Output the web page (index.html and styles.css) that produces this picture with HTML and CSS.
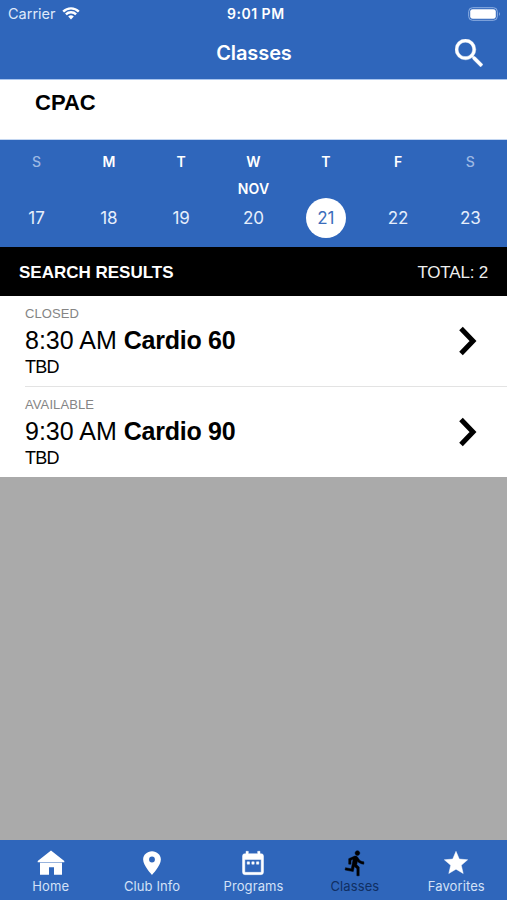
FILE: index.html
```html
<!DOCTYPE html>
<html lang="en">
<head>
<meta charset="utf-8">
<title>Classes</title>
<link rel="stylesheet" href="styles.css">
</head>
<body>
<div class="app">
  <header class="header">
    <div class="status">
      <div class="carrier"><span>Carrier</span>
        <svg class="wifi" viewBox="0 0 18 13"><path d="M9 12.4 6.2 9.6a4 4 0 0 1 5.6 0z" fill="#fff"/><path d="M3.9 7.4a7.3 7.3 0 0 1 10.2 0M1.2 4.6a11.1 11.1 0 0 1 15.6 0" fill="none" stroke="#fff" stroke-width="2.4"/></svg>
      </div>
      <span class="time">9:01 PM</span>
      <svg class="battery" viewBox="0 0 33 14"><rect x=".7" y=".7" width="28.6" height="12.6" rx="3.8" fill="none" stroke="#8fb0e3"/><rect x="2.2" y="2.2" width="25.6" height="9.6" rx="2.4" fill="#fff"/><path d="M31 4.8q1.6 2.2 0 4.4z" fill="#a5c0ea"/></svg>
    </div>
    <div class="navbar">
      <h1 class="title">Classes</h1>
      <svg class="search" viewBox="3 3 17.5 17.5"><path fill="#fff" stroke="#fff" stroke-width=".25" d="M15.5 14h-.79l-.28-.27A6.47 6.47 0 0 0 16 9.5 6.5 6.5 0 1 0 9.5 16c1.61 0 3.09-.59 4.23-1.57l.27.28v.79l5 4.99L20.49 19l-4.99-5zm-6 0C7.01 14 5 11.99 5 9.5S7.01 5 9.5 5 14 7.01 14 9.5 11.99 14 9.5 14z"/></svg>
    </div>
  </header>
  <div class="club"><span>CPAC</span></div>
  <section class="calendar">
    <div class="week days"><span class="off">S</span><span>M</span><span>T</span><span>W</span><span>T</span><span>F</span><span class="off">S</span></div>
    <div class="month"><span>NOV</span></div>
    <div class="week dates"><span>17</span><span>18</span><span>19</span><span>20</span><span class="selected">21</span><span>22</span><span>23</span></div>
  </section>
  <div class="results"><strong class="heading">SEARCH RESULTS</strong><span class="total">TOTAL: 2</span></div>
  <main class="list">
    <article class="row">
      <div class="info"><div class="state">CLOSED</div><div class="name"><span class="hour">8:30 AM</span><b class="class">Cardio 60</b></div><div class="coach">TBD</div></div>
      <svg class="chevron" viewBox="0 0 18 30"><path d="M2 2.5 14 15 2 27.5" fill="none" stroke="#000" stroke-width="5"/></svg>
    </article>
    <article class="row">
      <div class="info"><div class="state">AVAILABLE</div><div class="name"><span class="hour">9:30 AM</span><b class="class">Cardio 90</b></div><div class="coach">TBD</div></div>
      <svg class="chevron" viewBox="0 0 18 30"><path d="M2 2.5 14 15 2 27.5" fill="none" stroke="#000" stroke-width="5"/></svg>
    </article>
  </main>
  <nav class="tabs">
    <div class="tab"><svg viewBox="0 0 28 28"><path d="M14 1.5 27.3 12v1.2H.7V12zM3 13.8h22v12h-8v-7.6h-5v7.6H3z"/></svg><span>Home</span></div>
    <div class="tab"><svg viewBox="0 0 24 24"><path d="M12 2C7.8 2 4.4 5.13 4.4 9c0 5.25 7.6 13.2 7.6 13.2S19.6 14.25 19.6 9c0-3.87-3.4-7-7.6-7zm0 9.5a2.5 2.5 0 0 1 0-5 2.5 2.5 0 0 1 0 5z"/></svg><span>Club Info</span></div>
    <div class="tab"><svg viewBox="0 0 24 24"><path d="M9 11H7v2h2v-2zm4 0h-2v2h2v-2zm4 0h-2v2h2v-2zm2-7h-1V2h-2v2H8V2H6v2H5a2 2 0 0 0-2 2v14a2 2 0 0 0 2 2h14a2 2 0 0 0 2-2V6a2 2 0 0 0-2-2zm0 16H5V9h14v11z" stroke="#fff" stroke-width=".4"/></svg><span>Programs</span></div>
    <div class="tab active"><svg viewBox="0 0 24 24"><path transform="translate(.6 0)" stroke="#000" stroke-width=".4" d="M13.49 5.48c1.1 0 2-.9 2-2s-.9-2-2-2-2 .9-2 2 .9 2 2 2zm-3.6 13.9 1-4.4 2.1 2v6h2v-7.5l-2.1-2 .6-3c1.3 1.5 3.3 2.5 5.5 2.5v-2c-1.9 0-3.5-1-4.3-2.4l-1-1.6c-.4-.6-1-1-1.7-1-.3 0-.5.1-.8.1l-5.2 2.2v4.7h2v-3.4l1.8-.7-1.6 8.1-4.9-1-.4 2 7 1.4z"/></svg><span>Classes</span></div>
    <div class="tab"><svg viewBox="0 0 24 24"><path d="M12 17.27 18.18 21l-1.64-7.03L22 9.24l-7.19-.61L12 2 9.19 8.63 2 9.24l5.46 4.73L5.82 21z" stroke="#fff" stroke-width=".4"/></svg><span>Favorites</span></div>
  </nav>
</div>
</body>
</html>
```
FILE: styles.css
```css
* { box-sizing: border-box; }
body { margin: 0; font-family: Inter, sans-serif; }
svg { display: block; flex: none; }
.app { width: 507px; height: 900px; display: flex; flex-direction: column; background: #aaa; overflow: hidden; }
.header { height: 79px; background: #2f66bb; color: #fff; }
.status { height: 27px; padding: 0 6px 0 8px; display: grid; grid-template-columns: 219px auto 1fr; align-items: center; }
.carrier { display: flex; align-items: center; gap: 6px; font-size: 14.5px; color: #dfe9fa; }
.wifi { width: 18px; height: 13px; }
.time { font-size: 14px; font-weight: 600; letter-spacing: .5px; }
.battery { width: 33px; height: 14px; justify-self: end; }
.navbar { height: 51px; padding: 0 24px 0 25px; display: grid; grid-template-columns: 1fr auto 1fr; align-items: center; }
.title { grid-column: 2; margin: 0; font-size: 20px; line-height: 24px; font-weight: 600; letter-spacing: -.1px; }
.search { width: 28px; height: 28px; justify-self: end; }
.club { height: 61px; padding: 9px 35px; background: #fff; border-top: 1px solid #a9c5ee; border-bottom: 1px solid #c3d6f1; font: bold 22px/28px "Liberation Sans", sans-serif; }
.calendar { height: 107px; background: #2f66bb; color: #fff; padding-top: 12px; }
.week { display: grid; grid-template-columns: repeat(7, 72.3px); justify-content: center; justify-items: center; }
.days { font-size: 14px; line-height: 20px; font-weight: 600; }
.off { color: #9db8e3; font-weight: 500; }
.month { height: 26px; text-align: center; font-size: 14px; line-height: 34px; font-weight: 600; letter-spacing: .2px; }
.dates { font-size: 17px; line-height: 40px; color: #e6eefb; }
.dates span { width: 40px; height: 40px; text-align: center; }
.dates .selected { border-radius: 50%; background: #fff; color: #3c6dbb; }
.results { height: 49px; padding: 2px 19px 0; display: flex; align-items: center; justify-content: space-between; background: #000; color: #fff; font: 17px/47px "Liberation Sans", sans-serif; }
.total { color: #eee; letter-spacing: -.2px; }
.list { background: #fff; font-family: "Liberation Sans", sans-serif; color: #000; }
.row { height: 90px; margin-left: 25px; padding-right: 30px; display: flex; align-items: center; justify-content: space-between; }
.row + .row { height: 91px; border-top: 1px solid #e3e3e3; }
.info { height: 84px; padding-top: 6px; }
.state { font-size: 13px; line-height: 18px; color: #858585; letter-spacing: .1px; }
.name { display: flex; gap: 7px; font-size: 25px; line-height: 34px; }
.class { letter-spacing: -.25px; }
.coach { font-size: 18px; line-height: 21px; letter-spacing: -.8px; }
.chevron { width: 18px; height: 30px; }
.tabs { margin-top: auto; height: 60px; padding-top: 9px; background: #2f66bb; display: grid; grid-template-columns: repeat(5, 1fr); }
.tab { display: flex; flex-direction: column; align-items: center; font-size: 13px; line-height: 19px; color: #d3e1f7; letter-spacing: .1px; }
.tab svg { width: 28px; height: 28px; fill: #fff; }
.tab.active { color: #102f63; }
.tab.active svg { fill: #000; }
```
